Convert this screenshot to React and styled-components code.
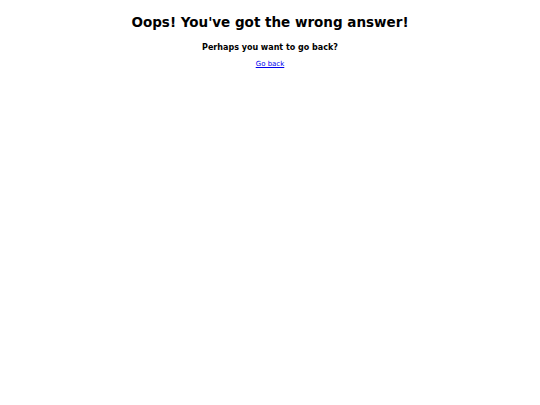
import React from 'react'
import styled, { createGlobalStyle } from 'styled-components'

const GlobalStyle = createGlobalStyle`
    body {
        margin: 0;
        background: #FFFFFF;
        font-family: "DejaVu Sans", Verdana, sans-serif;
    }
`

const Page = styled.div`
    display: flex;
    flex-direction: column;
    align-items: center;
    padding-top: 14px;
    text-align: center;
`

const Title = styled.h1`
    margin: 0;
    font-size: 13.5px;
    line-height: 16px;
    font-weight: 700;
    color: #000000;
`

const SubTitle = styled.h3`
    margin: 12.5px 0 0;
    font-size: 8px;
    line-height: 10px;
    font-weight: 700;
    color: #000000;
`

const BackLink = styled.a`
    margin-top: 7px;
    font-size: 7px;
    line-height: 9px;
    color: #0000EE;
    text-decoration: underline;
`

function App() {
  return (
    <Page>
        <GlobalStyle />
        <Title>Oops! You've got the wrong answer!</Title>
        <SubTitle>Perhaps you want to go back?</SubTitle>
        <BackLink href="#">Go back</BackLink>
    </Page>
  )
}

export default App
